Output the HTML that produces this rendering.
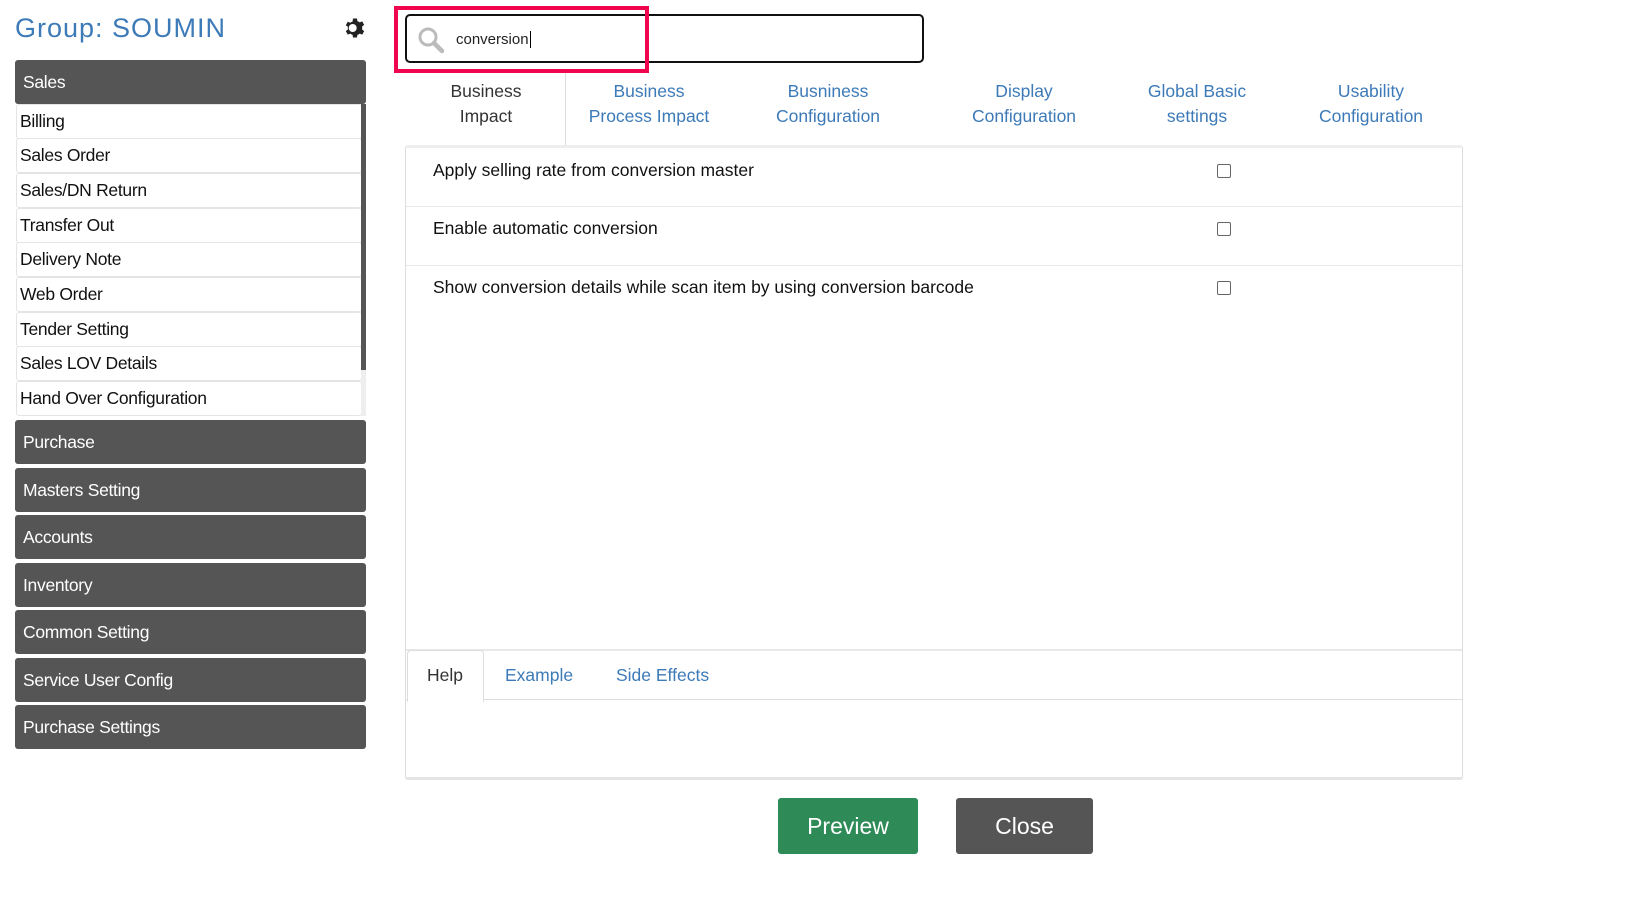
<!DOCTYPE html><html><head><style>
body{margin:0;width:1628px;height:897px;background:#fff;font-family:"Liberation Sans",sans-serif;position:relative;overflow:hidden}
.a{position:absolute}
.title{left:15px;top:13px;font-size:27px;color:#3d7ab8;letter-spacing:1px}
.hdr{position:absolute;left:15px;width:351px;height:44px;background:#555;color:#fff;border-radius:3px;font-size:17.5px;line-height:44px;text-indent:8px;letter-spacing:-0.3px}
.item{position:absolute;left:16px;width:344px;height:33px;border:1px solid #e4e4e4;border-radius:3px;background:#fff;font-size:17.5px;line-height:33px;text-indent:3px;color:#111;letter-spacing:-0.3px}
.tab{position:absolute;top:79px;font-size:17.5px;line-height:25px;color:#3d7ab8;text-align:center;transform:translateX(-50%);white-space:nowrap}
.row{position:absolute;left:433px;font-size:17.5px;color:#111}
.cb{position:absolute;left:1217px;width:12px;height:12px;border:1px solid #666;border-radius:2px}
.btn{position:absolute;top:798px;height:56px;color:#fff;font-size:23px;line-height:56px;text-align:center;border-radius:3px}
</style></head><body>
<div class="a title">Group: SOUMIN</div>
<svg class="a" style="left:343px;top:16px" width="24" height="24" viewBox="0 0 24 24"><path fill="#222" d="M12 8a4 4 0 1 0 0 8 4 4 0 0 0 0-8zm9.4 5.5l2.1 1.6-2 3.5-2.5-1a8 8 0 0 1-2.3 1.3L16.3 21.5h-4l-.4-2.6a8 8 0 0 1-2.3-1.3l-2.5 1-2-3.5 2.1-1.6a8 8 0 0 1 0-2.6L5.1 9.3l2-3.5 2.5 1a8 8 0 0 1 2.3-1.3L12.3 2.5h4l.4 2.6a8 8 0 0 1 2.3 1.3l2.5-1 2 3.5-2.1 1.6a8 8 0 0 1 0 2.6z" transform="translate(-2.3 0)"/></svg>
<div class="hdr" style="top:60px">Sales</div>
<div class="item" style="top:104px">Billing</div>
<div class="item" style="top:138px">Sales Order</div>
<div class="item" style="top:173px">Sales/DN Return</div>
<div class="item" style="top:208px">Transfer Out</div>
<div class="item" style="top:242px">Delivery Note</div>
<div class="item" style="top:277px">Web Order</div>
<div class="item" style="top:312px">Tender Setting</div>
<div class="item" style="top:346px">Sales LOV Details</div>
<div class="item" style="top:381px">Hand Over Configuration</div>
<div class="a" style="left:361px;top:104px;width:5px;height:266px;background:#555"></div>
<div class="a" style="left:361px;top:370px;width:5px;height:46px;background:#eee"></div>
<div class="hdr" style="top:420px">Purchase</div>
<div class="hdr" style="top:468px">Masters Setting</div>
<div class="hdr" style="top:515px">Accounts</div>
<div class="hdr" style="top:563px">Inventory</div>
<div class="hdr" style="top:610px">Common Setting</div>
<div class="hdr" style="top:658px">Service User Config</div>
<div class="hdr" style="top:705px">Purchase Settings</div>

<div class="a" style="left:405px;top:14px;width:515px;height:45px;border:2px solid #111;border-radius:5px"></div>
<svg class="a" style="left:417px;top:26px" width="30" height="28" viewBox="0 0 30 28"><circle cx="11" cy="11" r="8" fill="none" stroke="#bbb" stroke-width="3"/><path d="M17 17l8 8" stroke="#bbb" stroke-width="4.5" stroke-linecap="round"/></svg>
<div class="a" style="left:456px;top:31px;font-size:15px;color:#222">conversion<span style="border-left:1px solid #000;margin-left:1px"></span></div>
<div class="a" style="left:394px;top:6px;width:247px;height:59px;border:4px solid #f0064f"></div>

<div class="a" style="left:406px;top:73px;width:159px;height:73px;border-right:1px solid #ddd;background:#fff"></div>
<div class="tab" style="left:486px;color:#333">Business<br>Impact</div>
<div class="tab" style="left:649px">Business<br>Process Impact</div>
<div class="tab" style="left:828px">Busniness<br>Configuration</div>
<div class="tab" style="left:1024px">Display<br>Configuration</div>
<div class="tab" style="left:1197px">Global Basic<br>settings</div>
<div class="tab" style="left:1371px">Usability<br>Configuration</div>

<div class="a" style="left:405px;top:145px;width:1056px;height:629px;border:1px solid #ddd;border-top:3px solid #eee;border-bottom:3px solid #e4e4e4;border-radius:3px"></div>
<div class="row" style="top:160px">Apply selling rate from conversion master</div>
<div class="cb" style="top:164px"></div>
<div class="a" style="left:406px;top:206px;width:1056px;height:1px;background:#e8e8e8"></div>
<div class="row" style="top:218px">Enable automatic conversion</div>
<div class="cb" style="top:222px"></div>
<div class="a" style="left:406px;top:265px;width:1056px;height:1px;background:#e8e8e8"></div>
<div class="row" style="top:277px">Show conversion details while scan item by using conversion barcode</div>
<div class="cb" style="top:281px"></div>

<div class="a" style="left:406px;top:649px;width:1056px;height:2px;background:#e8e8e8"></div>
<div class="a" style="left:406px;top:699px;width:1056px;height:1px;background:#ddd"></div>
<div class="a" style="left:407px;top:650px;width:75px;height:51px;background:#fff;border:1px solid #ddd;border-bottom:none;border-radius:4px 4px 0 0"></div>
<div class="a" style="left:427px;top:665px;font-size:17.5px;color:#333">Help</div>
<div class="a" style="left:505px;top:665px;font-size:17.5px;color:#3d7ab8">Example</div>
<div class="a" style="left:616px;top:665px;font-size:17.5px;color:#3d7ab8">Side Effects</div>

<div class="btn" style="left:778px;width:140px;background:#2e8b57">Preview</div>
<div class="btn" style="left:956px;width:137px;background:#555">Close</div>
</body></html>
